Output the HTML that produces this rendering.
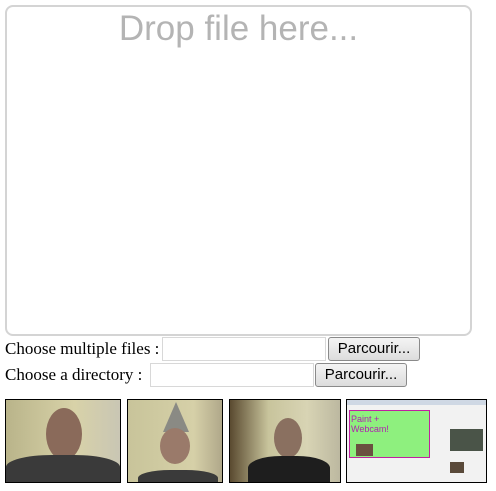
<!DOCTYPE html>
<html><head><meta charset="utf-8"><style>
html,body{margin:0;padding:0;background:#fff;width:496px;height:491px;overflow:hidden;position:relative}
.dz{position:absolute;left:5px;top:5px;width:463px;height:327px;border:2px solid #d4d4d4;border-radius:8px}
.dz span{position:absolute;left:0;right:0;top:2px;text-align:center;font:35px "Liberation Sans",sans-serif;color:#b4b4b4}
.t{position:absolute;font:17px "Liberation Serif",serif;color:#000;white-space:nowrap}
.in{position:absolute;height:22px;border:1px solid #d8d8d8;background:#fff}
.bt{position:absolute;border:1px solid #8a8a8a;border-radius:3px;background:linear-gradient(#f4f4f4,#dcdcdc);font:15px "Liberation Sans",sans-serif;text-align:center;line-height:22px;box-sizing:border-box;height:24px}
.im{position:absolute;top:399px;height:82px;border:1px solid #000;overflow:hidden}
</style></head><body>
<div class="dz"><span>Drop file here...</span></div>
<div class="t" style="left:5px;top:339px">Choose multiple files :</div>
<div class="in" style="left:162px;top:337px;width:162px"></div>
<div class="bt" style="left:328px;top:337px;width:92px">Parcourir...</div>
<div class="t" style="left:5px;top:365px">Choose a directory :</div>
<div class="in" style="left:150px;top:363px;width:162px"></div>
<div class="bt" style="left:315px;top:363px;width:92px">Parcourir...</div>

<div class="im" style="left:5px;width:114px;background:linear-gradient(90deg,#b9b48a,#d8d2a8 60%,#c9c6b4)">
 <div style="position:absolute;left:40px;top:8px;width:36px;height:52px;border-radius:50%;background:#8a6a5a"></div>
 <div style="position:absolute;left:0;top:55px;width:114px;height:30px;background:#3a3a3a;border-radius:40% 40% 0 0"></div>
</div>
<div class="im" style="left:127px;width:94px;background:linear-gradient(90deg,#c8c49a,#d6d0a8 70%,#b0a88a)">
 <div style="position:absolute;left:35px;top:2px;width:26px;height:30px;background:#8a8a84;clip-path:polygon(50% 0,100% 100%,0 100%)"></div>
 <div style="position:absolute;left:32px;top:28px;width:30px;height:36px;border-radius:50%;background:#9a7a6a"></div>
 <div style="position:absolute;left:10px;top:70px;width:80px;height:20px;background:#3a3a3a;border-radius:40% 40% 0 0"></div>
</div>
<div class="im" style="left:229px;width:110px;background:linear-gradient(90deg,#5a4a30,#c8c49c 35%,#d8d4b4 70%,#bcb8a0)">
 <div style="position:absolute;left:44px;top:18px;width:28px;height:40px;border-radius:50%;background:#8a7060"></div>
 <div style="position:absolute;left:18px;top:56px;width:82px;height:30px;background:#1e1e1e;border-radius:40% 40% 0 0"></div>
</div>
<div class="im" style="left:346px;width:139px;background:#f2f2f2">
 <div style="position:absolute;left:0;top:0;width:139px;height:5px;background:#cfd8e4"></div>
 <div style="position:absolute;left:2px;top:10px;width:79px;height:46px;background:#8ef07e;border:1px solid #c020a0"></div>
 <div style="position:absolute;left:4px;top:14px;font:9px 'Liberation Sans',sans-serif;color:#b020b0;line-height:10px">Paint +<br>Webcam!</div>
 <div style="position:absolute;left:9px;top:44px;width:17px;height:12px;background:#6a5040"></div>
 <div style="position:absolute;left:103px;top:29px;width:33px;height:22px;background:#4a5448"></div>
 <div style="position:absolute;left:103px;top:62px;width:14px;height:11px;background:#5a4a3a"></div>
</div>
</body></html>
